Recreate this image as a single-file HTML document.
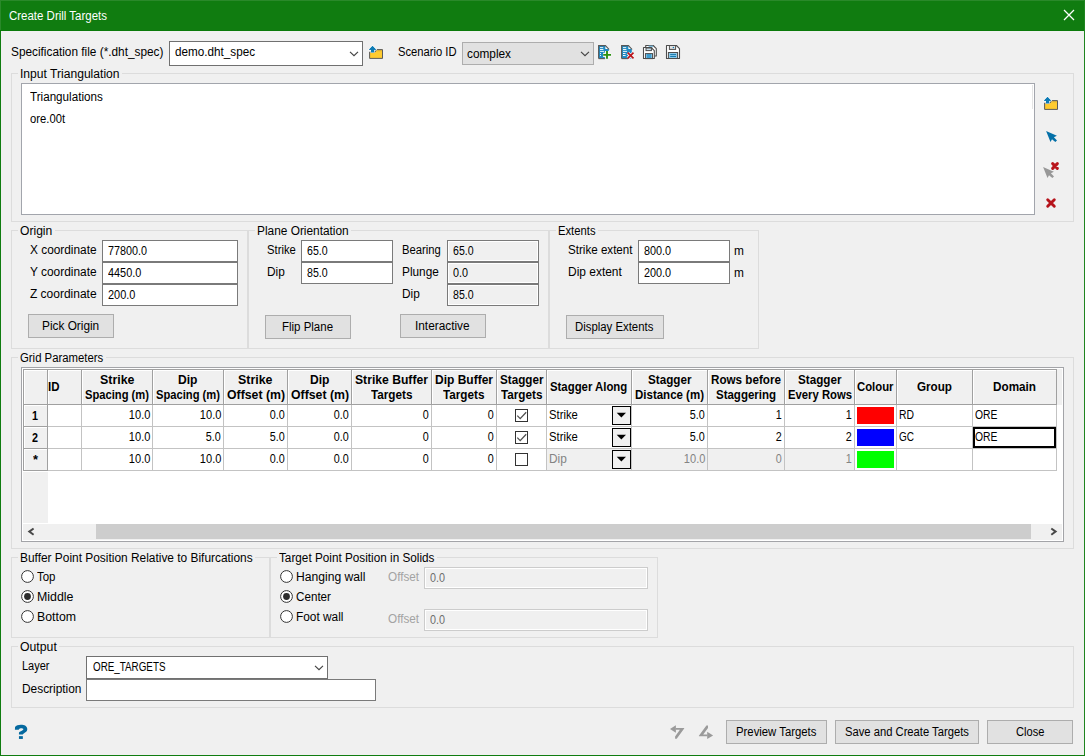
<!DOCTYPE html>
<html>
<head>
<meta charset="utf-8">
<title>Create Drill Targets</title>
<style>
*{box-sizing:border-box;margin:0;padding:0}
html,body{width:1085px;height:756px;overflow:hidden;background:#f0f0f0}
body{position:relative;font-family:"Liberation Sans",sans-serif;font-size:12px;color:#000;line-height:14px}
.a{position:absolute}
.t{position:absolute;white-space:nowrap;height:14px;line-height:14px;font-size:12px;transform-origin:0 50%}
.t.r{transform-origin:100% 50%}
.b{font-weight:bold}
svg{position:absolute;overflow:visible}
</style>
</head>
<body>
<div class="a" style="left:0px;top:0px;width:1085px;height:31px;background:#107c10"></div>
<div class="a" style="left:0px;top:0px;width:1085px;height:1px;background:#2a892a"></div>
<div class="a" style="left:0px;top:0px;width:1px;height:31px;background:#2a892a"></div>
<div class="a" style="left:0px;top:30px;width:1085px;height:1px;background:#0a7a0a"></div>
<div class="a" style="left:0px;top:31px;width:1px;height:725px;background:#107c10"></div>
<div class="a" style="left:1084px;top:0px;width:1px;height:756px;background:#1f851f"></div>
<div class="a" style="left:0px;top:755px;width:1085px;height:1px;background:#107c10"></div>
<div class="t" style="left:9px;top:9px;color:#fff;transform:scaleX(0.956)">Create Drill Targets</div>
<svg style="left:1063px;top:9px" width="12" height="12" viewBox="0 0 12 12"><path d="M1 1L11 11M11 1L1 11" stroke="#fff" stroke-width="1.25" fill="none"/></svg>
<div class="t" style="left:11px;top:45px;transform:scaleX(0.985)">Specification file (*.dht_spec)</div>
<div class="a" style="left:169px;top:41px;width:194px;height:25px;background:#fff;border:1px solid #707070"></div>
<div class="t" style="left:175.4px;top:45px;transform:scaleX(0.975)">demo.dht_spec</div>
<svg style="left:349px;top:51px" width="10" height="7" viewBox="0 0 10 7"><path d="M1 0.8L5 4.7L9 0.8" fill="none" stroke="#444" stroke-width="1.15"/></svg>
<div class="t" style="left:398.1px;top:45px;transform:scaleX(0.933)">Scenario ID</div>
<div class="a" style="left:462px;top:42px;width:132px;height:23px;background:#e1e1e1;border:1px solid #adadad"></div>
<div class="t" style="left:466.8px;top:46.6px;transform:scaleX(0.985)">complex</div>
<svg style="left:580px;top:51px" width="10" height="7" viewBox="0 0 10 7"><path d="M1 0.8L5 4.7L9 0.8" fill="none" stroke="#444" stroke-width="1.15"/></svg>
<div class="a" style="left:11px;top:73px;width:1063px;height:149px;border:1px solid #dcdcdc"></div>
<div class="a" style="left:18px;top:71px;width:104px;height:5px;background:#f0f0f0"></div>
<div class="t" style="left:20.4px;top:66.6px;transform:scaleX(1.008)">Input Triangulation</div>
<div class="a" style="left:21px;top:83px;width:1014px;height:132px;background:#fff;border:1px solid #a2a5ac"></div>
<div class="a" style="left:1032px;top:85px;width:1px;height:24px;background:#e5e5e5"></div>
<div class="t" style="left:29.9px;top:90px;transform:scaleX(0.971)">Triangulations</div>
<div class="t" style="left:29.9px;top:112px;transform:scaleX(0.937)">ore.00t</div>
<div class="a" style="left:11px;top:230px;width:237px;height:119px;border:1px solid #dcdcdc"></div>
<div class="a" style="left:18px;top:228px;width:37px;height:5px;background:#f0f0f0"></div>
<div class="t" style="left:20.4px;top:223.6px;transform:scaleX(1.009)">Origin</div>
<div class="t" style="left:29.9px;top:243px;transform:scaleX(0.988)">X coordinate</div>
<div class="t" style="left:29.9px;top:265px;transform:scaleX(0.991)">Y coordinate</div>
<div class="t" style="left:29.9px;top:287px">Z coordinate</div>
<div class="a" style="left:102px;top:240px;width:136px;height:22px;background:#fff;border:1px solid #7a7a7a"></div>
<div class="a" style="left:102px;top:262px;width:136px;height:22px;background:#fff;border:1px solid #7a7a7a"></div>
<div class="a" style="left:102px;top:284px;width:136px;height:22px;background:#fff;border:1px solid #7a7a7a"></div>
<div class="t" style="left:107.7px;top:244px;transform:scaleX(0.899)">77800.0</div>
<div class="t" style="left:107.7px;top:266px;transform:scaleX(0.907)">4450.0</div>
<div class="t" style="left:107.7px;top:288px;transform:scaleX(0.912)">200.0</div>
<div class="a" style="left:28px;top:314px;width:86px;height:24px;background:#e1e1e1;border:1px solid #adadad"></div>
<div class="t" style="left:42.3px;top:319px;transform:scaleX(0.986)">Pick Origin</div>
<div class="a" style="left:248px;top:230px;width:301px;height:119px;border:1px solid #dcdcdc"></div>
<div class="a" style="left:255px;top:228px;width:96px;height:5px;background:#f0f0f0"></div>
<div class="t" style="left:257.4px;top:223.6px;transform:scaleX(0.989)">Plane Orientation</div>
<div class="t" style="left:267px;top:243px;transform:scaleX(0.938)">Strike</div>
<div class="t" style="left:267px;top:265px;transform:scaleX(0.988)">Dip</div>
<div class="a" style="left:301px;top:240px;width:92px;height:22px;background:#fff;border:1px solid #7a7a7a"></div>
<div class="a" style="left:301px;top:262px;width:92px;height:22px;background:#fff;border:1px solid #7a7a7a"></div>
<div class="t" style="left:307.2px;top:244px;transform:scaleX(0.882)">65.0</div>
<div class="t" style="left:307.2px;top:266px;transform:scaleX(0.882)">85.0</div>
<div class="t" style="left:402.2px;top:243px;transform:scaleX(0.938)">Bearing</div>
<div class="t" style="left:402.2px;top:265px;transform:scaleX(0.985)">Plunge</div>
<div class="t" style="left:402.2px;top:287px;transform:scaleX(0.988)">Dip</div>
<div class="a" style="left:447px;top:240px;width:92px;height:22px;background:#f0f0f0;border:1px solid #7a7a7a;box-shadow:inset 0 0 0 1px #fff"></div>
<div class="a" style="left:447px;top:262px;width:92px;height:22px;background:#f0f0f0;border:1px solid #7a7a7a;box-shadow:inset 0 0 0 1px #fff"></div>
<div class="a" style="left:447px;top:284px;width:92px;height:22px;background:#f0f0f0;border:1px solid #7a7a7a;box-shadow:inset 0 0 0 1px #fff"></div>
<div class="t" style="left:453px;top:244px;transform:scaleX(0.882)">65.0</div>
<div class="t" style="left:453px;top:266px;transform:scaleX(0.899)">0.0</div>
<div class="t" style="left:453px;top:288px;transform:scaleX(0.882)">85.0</div>
<div class="a" style="left:265px;top:315px;width:86px;height:24px;background:#e1e1e1;border:1px solid #adadad"></div>
<div class="t" style="left:282.3px;top:320px;transform:scaleX(0.956)">Flip Plane</div>
<div class="a" style="left:400px;top:314px;width:86px;height:24px;background:#e1e1e1;border:1px solid #adadad"></div>
<div class="t" style="left:415.4px;top:319px;transform:scaleX(0.986)">Interactive</div>
<div class="a" style="left:549px;top:230px;width:210px;height:119px;border:1px solid #dcdcdc"></div>
<div class="a" style="left:556px;top:228px;width:42px;height:5px;background:#f0f0f0"></div>
<div class="t" style="left:558.4px;top:223.6px;transform:scaleX(0.937)">Extents</div>
<div class="t" style="left:568px;top:243px;transform:scaleX(0.967)">Strike extent</div>
<div class="t" style="left:568px;top:265px;transform:scaleX(0.996)">Dip extent</div>
<div class="a" style="left:638px;top:240px;width:92px;height:22px;background:#fff;border:1px solid #7a7a7a"></div>
<div class="a" style="left:638px;top:262px;width:92px;height:22px;background:#fff;border:1px solid #7a7a7a"></div>
<div class="t" style="left:644.2px;top:244px;transform:scaleX(0.902)">800.0</div>
<div class="t" style="left:644.2px;top:266px;transform:scaleX(0.902)">200.0</div>
<div class="t" style="left:733.5px;top:244px;transform:scaleX(0.990)">m</div>
<div class="t" style="left:733.5px;top:266px;transform:scaleX(0.990)">m</div>
<div class="a" style="left:566px;top:315px;width:98px;height:24px;background:#e1e1e1;border:1px solid #adadad"></div>
<div class="t" style="left:575.3px;top:320px;transform:scaleX(0.947)">Display Extents</div>
<div class="a" style="left:11px;top:357px;width:1063px;height:192px;border:1px solid #dcdcdc"></div>
<div class="a" style="left:18px;top:355px;width:88px;height:5px;background:#f0f0f0"></div>
<div class="t" style="left:20.4px;top:350.6px;transform:scaleX(0.946)">Grid Parameters</div>
<div class="a" style="left:21px;top:367px;width:1043px;height:175px;background:#fff;border:1px solid #a3a4a8"></div>
<div class="a" style="left:23px;top:369px;width:1034px;height:36px;background:#f0f0f0;border-top:1px solid #a0a0a0;border-bottom:1px solid #a0a0a0"></div>
<div class="a" style="left:1057px;top:369px;width:5px;height:36px;background:#f0f0f0"></div>
<div class="a" style="left:23px;top:405px;width:25px;height:66px;background:#f0f0f0"></div>
<div class="a" style="left:23px;top:472px;width:25px;height:51px;background:#f0f0f0"></div>
<div class="a" style="left:547px;top:449px;width:307px;height:21px;background:#f0f0f0"></div>
<div class="a" style="left:24px;top:370px;width:23px;height:1px;background:#fff"></div>
<div class="a" style="left:24px;top:370px;width:1px;height:34px;background:#fff"></div>
<div class="a" style="left:48px;top:370px;width:33px;height:1px;background:#fff"></div>
<div class="a" style="left:48px;top:370px;width:1px;height:34px;background:#fff"></div>
<div class="a" style="left:82px;top:370px;width:70px;height:1px;background:#fff"></div>
<div class="a" style="left:82px;top:370px;width:1px;height:34px;background:#fff"></div>
<div class="a" style="left:153px;top:370px;width:70px;height:1px;background:#fff"></div>
<div class="a" style="left:153px;top:370px;width:1px;height:34px;background:#fff"></div>
<div class="a" style="left:224px;top:370px;width:63px;height:1px;background:#fff"></div>
<div class="a" style="left:224px;top:370px;width:1px;height:34px;background:#fff"></div>
<div class="a" style="left:288px;top:370px;width:63px;height:1px;background:#fff"></div>
<div class="a" style="left:288px;top:370px;width:1px;height:34px;background:#fff"></div>
<div class="a" style="left:352px;top:370px;width:79px;height:1px;background:#fff"></div>
<div class="a" style="left:352px;top:370px;width:1px;height:34px;background:#fff"></div>
<div class="a" style="left:432px;top:370px;width:64px;height:1px;background:#fff"></div>
<div class="a" style="left:432px;top:370px;width:1px;height:34px;background:#fff"></div>
<div class="a" style="left:497px;top:370px;width:49px;height:1px;background:#fff"></div>
<div class="a" style="left:497px;top:370px;width:1px;height:34px;background:#fff"></div>
<div class="a" style="left:547px;top:370px;width:84px;height:1px;background:#fff"></div>
<div class="a" style="left:547px;top:370px;width:1px;height:34px;background:#fff"></div>
<div class="a" style="left:632px;top:370px;width:75px;height:1px;background:#fff"></div>
<div class="a" style="left:632px;top:370px;width:1px;height:34px;background:#fff"></div>
<div class="a" style="left:708px;top:370px;width:76px;height:1px;background:#fff"></div>
<div class="a" style="left:708px;top:370px;width:1px;height:34px;background:#fff"></div>
<div class="a" style="left:785px;top:370px;width:69px;height:1px;background:#fff"></div>
<div class="a" style="left:785px;top:370px;width:1px;height:34px;background:#fff"></div>
<div class="a" style="left:855px;top:370px;width:41px;height:1px;background:#fff"></div>
<div class="a" style="left:855px;top:370px;width:1px;height:34px;background:#fff"></div>
<div class="a" style="left:897px;top:370px;width:75px;height:1px;background:#fff"></div>
<div class="a" style="left:897px;top:370px;width:1px;height:34px;background:#fff"></div>
<div class="a" style="left:973px;top:370px;width:83px;height:1px;background:#fff"></div>
<div class="a" style="left:973px;top:370px;width:1px;height:34px;background:#fff"></div>
<div class="a" style="left:24px;top:405px;width:23px;height:1px;background:#fff"></div>
<div class="a" style="left:24px;top:405px;width:1px;height:21px;background:#fff"></div>
<div class="a" style="left:24px;top:427px;width:23px;height:1px;background:#fff"></div>
<div class="a" style="left:24px;top:427px;width:1px;height:21px;background:#fff"></div>
<div class="a" style="left:24px;top:449px;width:23px;height:1px;background:#fff"></div>
<div class="a" style="left:24px;top:449px;width:1px;height:21px;background:#fff"></div>
<div class="a" style="left:81px;top:405px;width:1px;height:66px;background:#c3c3c3"></div>
<div class="a" style="left:152px;top:405px;width:1px;height:66px;background:#c3c3c3"></div>
<div class="a" style="left:223px;top:405px;width:1px;height:66px;background:#c3c3c3"></div>
<div class="a" style="left:287px;top:405px;width:1px;height:66px;background:#c3c3c3"></div>
<div class="a" style="left:351px;top:405px;width:1px;height:66px;background:#c3c3c3"></div>
<div class="a" style="left:431px;top:405px;width:1px;height:66px;background:#c3c3c3"></div>
<div class="a" style="left:496px;top:405px;width:1px;height:66px;background:#c3c3c3"></div>
<div class="a" style="left:546px;top:405px;width:1px;height:66px;background:#c3c3c3"></div>
<div class="a" style="left:631px;top:405px;width:1px;height:66px;background:#c3c3c3"></div>
<div class="a" style="left:707px;top:405px;width:1px;height:66px;background:#c3c3c3"></div>
<div class="a" style="left:784px;top:405px;width:1px;height:66px;background:#c3c3c3"></div>
<div class="a" style="left:854px;top:405px;width:1px;height:66px;background:#c3c3c3"></div>
<div class="a" style="left:896px;top:405px;width:1px;height:66px;background:#c3c3c3"></div>
<div class="a" style="left:972px;top:405px;width:1px;height:66px;background:#c3c3c3"></div>
<div class="a" style="left:1056px;top:405px;width:1px;height:66px;background:#c3c3c3"></div>
<div class="a" style="left:48px;top:426px;width:1009px;height:1px;background:#c3c3c3"></div>
<div class="a" style="left:48px;top:448px;width:1009px;height:1px;background:#c3c3c3"></div>
<div class="a" style="left:48px;top:470px;width:1009px;height:1px;background:#c3c3c3"></div>
<div class="a" style="left:23px;top:369px;width:1px;height:36px;background:#a0a0a0"></div>
<div class="a" style="left:47px;top:369px;width:1px;height:36px;background:#a0a0a0"></div>
<div class="a" style="left:81px;top:369px;width:1px;height:36px;background:#a0a0a0"></div>
<div class="a" style="left:152px;top:369px;width:1px;height:36px;background:#a0a0a0"></div>
<div class="a" style="left:223px;top:369px;width:1px;height:36px;background:#a0a0a0"></div>
<div class="a" style="left:287px;top:369px;width:1px;height:36px;background:#a0a0a0"></div>
<div class="a" style="left:351px;top:369px;width:1px;height:36px;background:#a0a0a0"></div>
<div class="a" style="left:431px;top:369px;width:1px;height:36px;background:#a0a0a0"></div>
<div class="a" style="left:496px;top:369px;width:1px;height:36px;background:#a0a0a0"></div>
<div class="a" style="left:546px;top:369px;width:1px;height:36px;background:#a0a0a0"></div>
<div class="a" style="left:631px;top:369px;width:1px;height:36px;background:#a0a0a0"></div>
<div class="a" style="left:707px;top:369px;width:1px;height:36px;background:#a0a0a0"></div>
<div class="a" style="left:784px;top:369px;width:1px;height:36px;background:#a0a0a0"></div>
<div class="a" style="left:854px;top:369px;width:1px;height:36px;background:#a0a0a0"></div>
<div class="a" style="left:896px;top:369px;width:1px;height:36px;background:#a0a0a0"></div>
<div class="a" style="left:972px;top:369px;width:1px;height:36px;background:#a0a0a0"></div>
<div class="a" style="left:1056px;top:369px;width:1px;height:36px;background:#a0a0a0"></div>
<div class="a" style="left:23px;top:369px;width:1px;height:102px;background:#a0a0a0"></div>
<div class="a" style="left:47px;top:369px;width:1px;height:102px;background:#a0a0a0"></div>
<div class="a" style="left:23px;top:404px;width:25px;height:1px;background:#a0a0a0"></div>
<div class="a" style="left:23px;top:426px;width:25px;height:1px;background:#a0a0a0"></div>
<div class="a" style="left:23px;top:448px;width:25px;height:1px;background:#a0a0a0"></div>
<div class="a" style="left:23px;top:470px;width:25px;height:1px;background:#a0a0a0"></div>
<div class="a" style="left:48px;top:404px;width:1009px;height:1px;background:#a0a0a0"></div>
<div class="t b" style="left:48px;top:380px;transform:scaleX(0.958)">ID</div>
<div class="t b" style="left:99.75px;top:373px;transform:scaleX(1.034)">Strike</div>
<div class="t b" style="left:85.0px;top:388px;transform:scaleX(0.932)">Spacing (m)</div>
<div class="t b" style="left:178.25px;top:373px;transform:scaleX(1.008)">Dip</div>
<div class="t b" style="left:156.0px;top:388px;transform:scaleX(0.932)">Spacing (m)</div>
<div class="t b" style="left:238.25px;top:373px;transform:scaleX(1.034)">Strike</div>
<div class="t b" style="left:226.5px;top:388px;transform:scaleX(1.023)">Offset (m)</div>
<div class="t b" style="left:309.75px;top:373px;transform:scaleX(1.008)">Dip</div>
<div class="t b" style="left:290.5px;top:388px;transform:scaleX(1.023)">Offset (m)</div>
<div class="t b" style="left:355.0px;top:373px;transform:scaleX(1.013)">Strike Buffer</div>
<div class="t b" style="left:370.75px;top:388px;transform:scaleX(0.977)">Targets</div>
<div class="t b" style="left:435.0px;top:373px">Dip Buffer</div>
<div class="t b" style="left:443.25px;top:388px;transform:scaleX(0.977)">Targets</div>
<div class="t b" style="left:499.75px;top:373px;transform:scaleX(0.973)">Stagger</div>
<div class="t b" style="left:500.75px;top:388px;transform:scaleX(0.977)">Targets</div>
<div class="t b" style="left:550.4px;top:380px;transform:scaleX(0.947)">Stagger Along</div>
<div class="t b" style="left:647.75px;top:373px;transform:scaleX(0.973)">Stagger</div>
<div class="t b" style="left:635.0px;top:388px;transform:scaleX(0.958)">Distance (m)</div>
<div class="t b" style="left:711.0px;top:373px;transform:scaleX(0.972)">Rows before</div>
<div class="t b" style="left:716.0px;top:388px;transform:scaleX(0.957)">Staggering</div>
<div class="t b" style="left:797.75px;top:373px;transform:scaleX(0.973)">Stagger</div>
<div class="t b" style="left:787.5px;top:388px;transform:scaleX(0.941)">Every Rows</div>
<div class="t b" style="left:857.25px;top:380px;transform:scaleX(0.944)">Colour</div>
<div class="t b" style="left:917.0px;top:380px;transform:scaleX(0.972)">Group</div>
<div class="t b" style="left:993.0px;top:380px;transform:scaleX(0.977)">Domain</div>
<div class="t b" style="left:32.1px;top:408.5px;transform:scaleX(0.897)">1</div>
<div class="t b" style="left:32.1px;top:430.5px;transform:scaleX(0.897)">2</div>
<div class="t b" style="left:33.2px;top:452.5px;transform:scaleX(1.070)">*</div>
<div class="t r" style="right:934.5px;top:408px;transform:scaleX(0.920)">10.0</div>
<div class="t r" style="right:863.5px;top:408px;transform:scaleX(0.920)">10.0</div>
<div class="t r" style="right:800.0px;top:408px;transform:scaleX(0.899)">0.0</div>
<div class="t r" style="right:736.0px;top:408px;transform:scaleX(0.899)">0.0</div>
<div class="t r" style="right:656.2px;top:408px;transform:scaleX(0.897)">0</div>
<div class="t r" style="right:591.2px;top:408px;transform:scaleX(0.897)">0</div>
<div class="a" style="left:515px;top:409px;width:13px;height:13px;background:#fff;border:1px solid #333"></div>
<svg style="left:515px;top:409px" width="13" height="13" viewBox="0 0 13 13"><path d="M2.3 6.6L5.2 9.6L11.2 3.2" fill="none" stroke="#505050" stroke-width="1.3"/></svg>
<div class="t" style="left:549.2px;top:408px;transform:scaleX(0.938)">Strike</div>
<div class="a" style="left:612px;top:406px;width:19px;height:19px;background:#f0f0f0;border:1px solid #000;border-left-width:1.5px;border-bottom-width:1.5px"></div>
<svg style="left:616px;top:412px" width="11" height="7" viewBox="0 0 11 7"><path d="M0.7 0.8H10L5.35 5.6Z" fill="#000"/></svg>
<div class="t r" style="right:380.0px;top:408px;transform:scaleX(0.899)">5.0</div>
<div class="t r" style="right:303.5px;top:408px;transform:scaleX(0.897)">1</div>
<div class="t r" style="right:233.5px;top:408px;transform:scaleX(0.897)">1</div>
<div class="a" style="left:857px;top:407px;width:37px;height:17px;background:#ff0000"></div>
<div class="t" style="left:899.3px;top:408px;transform:scaleX(0.865)">RD</div>
<div class="t" style="left:975px;top:408px;transform:scaleX(0.861)">ORE</div>
<div class="t r" style="right:934.5px;top:430px;transform:scaleX(0.920)">10.0</div>
<div class="t r" style="right:864.0px;top:430px;transform:scaleX(0.899)">5.0</div>
<div class="t r" style="right:800.0px;top:430px;transform:scaleX(0.899)">5.0</div>
<div class="t r" style="right:736.0px;top:430px;transform:scaleX(0.899)">0.0</div>
<div class="t r" style="right:656.2px;top:430px;transform:scaleX(0.897)">0</div>
<div class="t r" style="right:591.2px;top:430px;transform:scaleX(0.897)">0</div>
<div class="a" style="left:515px;top:431px;width:13px;height:13px;background:#fff;border:1px solid #333"></div>
<svg style="left:515px;top:431px" width="13" height="13" viewBox="0 0 13 13"><path d="M2.3 6.6L5.2 9.6L11.2 3.2" fill="none" stroke="#505050" stroke-width="1.3"/></svg>
<div class="t" style="left:549.2px;top:430px;transform:scaleX(0.938)">Strike</div>
<div class="a" style="left:612px;top:428px;width:19px;height:19px;background:#f0f0f0;border:1px solid #000;border-left-width:1.5px;border-bottom-width:1.5px"></div>
<svg style="left:616px;top:434px" width="11" height="7" viewBox="0 0 11 7"><path d="M0.7 0.8H10L5.35 5.6Z" fill="#000"/></svg>
<div class="t r" style="right:380.0px;top:430px;transform:scaleX(0.899)">5.0</div>
<div class="t r" style="right:303.70000000000005px;top:430px;transform:scaleX(0.897)">2</div>
<div class="t r" style="right:233.70000000000005px;top:430px;transform:scaleX(0.897)">2</div>
<div class="a" style="left:857px;top:429px;width:37px;height:17px;background:#0000ff"></div>
<div class="t" style="left:899.3px;top:430px;transform:scaleX(0.833)">GC</div>
<div class="t" style="left:975px;top:430px;transform:scaleX(0.861)">ORE</div>
<div class="t r" style="right:934.5px;top:452px;transform:scaleX(0.920)">10.0</div>
<div class="t r" style="right:863.5px;top:452px;transform:scaleX(0.920)">10.0</div>
<div class="t r" style="right:800.0px;top:452px;transform:scaleX(0.899)">0.0</div>
<div class="t r" style="right:736.0px;top:452px;transform:scaleX(0.899)">0.0</div>
<div class="t r" style="right:656.2px;top:452px;transform:scaleX(0.897)">0</div>
<div class="t r" style="right:591.2px;top:452px;transform:scaleX(0.897)">0</div>
<div class="a" style="left:515px;top:453px;width:13px;height:13px;background:#fff;border:1px solid #333"></div>
<div class="t" style="left:549.2px;top:452px;color:#838383;transform:scaleX(0.988)">Dip</div>
<div class="a" style="left:612px;top:450px;width:19px;height:19px;background:#f0f0f0;border:1px solid #000;border-left-width:1.5px;border-bottom-width:1.5px"></div>
<svg style="left:616px;top:456px" width="11" height="7" viewBox="0 0 11 7"><path d="M0.7 0.8H10L5.35 5.6Z" fill="#000"/></svg>
<div class="t r" style="right:379.5px;top:452px;color:#838383;transform:scaleX(0.920)">10.0</div>
<div class="t r" style="right:303.20000000000005px;top:452px;color:#838383;transform:scaleX(0.897)">0</div>
<div class="t r" style="right:233.5px;top:452px;color:#838383;transform:scaleX(0.897)">1</div>
<div class="a" style="left:857px;top:451px;width:37px;height:17px;background:#00ff00"></div>
<div class="a" style="left:973px;top:427px;width:83px;height:21px;border:2px solid #000"></div>
<div class="a" style="left:23px;top:524px;width:1039px;height:16px;background:#f0f0f0"></div>
<div class="a" style="left:96px;top:524px;width:935px;height:15px;background:#cdcdcd"></div>
<svg style="left:27px;top:526px" width="8" height="11" viewBox="0 0 8 11"><path d="M6.6 2.5L2.3 5.6L6.6 8.7" fill="none" stroke="#484848" stroke-width="2"/></svg>
<svg style="left:1050px;top:526px" width="8" height="11" viewBox="0 0 8 11"><path d="M1.3 2.5L5.6 5.6L1.3 8.7" fill="none" stroke="#484848" stroke-width="2"/></svg>
<div class="a" style="left:11px;top:557px;width:259px;height:81px;border:1px solid #dcdcdc"></div>
<div class="a" style="left:18px;top:555px;width:237px;height:5px;background:#f0f0f0"></div>
<div class="t" style="left:20.4px;top:550.6px;transform:scaleX(0.992)">Buffer Point Position Relative to Bifurcations</div>
<svg style="left:21px;top:570px" width="13" height="13" viewBox="0 0 13 13"><circle cx="6.5" cy="6.5" r="5.9" fill="#fff" stroke="#333" stroke-width="1"/></svg>
<svg style="left:21px;top:590px" width="13" height="13" viewBox="0 0 13 13"><circle cx="6.5" cy="6.5" r="5.9" fill="#fff" stroke="#333" stroke-width="1"/><circle cx="6.5" cy="6.5" r="3.4" fill="#2c2c2c"/></svg>
<svg style="left:21px;top:610px" width="13" height="13" viewBox="0 0 13 13"><circle cx="6.5" cy="6.5" r="5.9" fill="#fff" stroke="#333" stroke-width="1"/></svg>
<div class="t" style="left:37px;top:570px;transform:scaleX(0.956)">Top</div>
<div class="t" style="left:37.4px;top:590px;transform:scaleX(1.032)">Middle</div>
<div class="t" style="left:37.4px;top:610px;transform:scaleX(1.026)">Bottom</div>
<div class="a" style="left:270px;top:557px;width:388px;height:81px;border:1px solid #dcdcdc"></div>
<div class="a" style="left:277px;top:555px;width:160px;height:5px;background:#f0f0f0"></div>
<div class="t" style="left:279.4px;top:550.6px;transform:scaleX(0.979)">Target Point Position in Solids</div>
<svg style="left:280px;top:570px" width="13" height="13" viewBox="0 0 13 13"><circle cx="6.5" cy="6.5" r="5.9" fill="#fff" stroke="#333" stroke-width="1"/></svg>
<svg style="left:280px;top:590px" width="13" height="13" viewBox="0 0 13 13"><circle cx="6.5" cy="6.5" r="5.9" fill="#fff" stroke="#333" stroke-width="1"/><circle cx="6.5" cy="6.5" r="3.4" fill="#2c2c2c"/></svg>
<svg style="left:280px;top:610px" width="13" height="13" viewBox="0 0 13 13"><circle cx="6.5" cy="6.5" r="5.9" fill="#fff" stroke="#333" stroke-width="1"/></svg>
<div class="t" style="left:295.9px;top:570px;transform:scaleX(1.011)">Hanging wall</div>
<div class="t" style="left:295.9px;top:590px;transform:scaleX(0.971)">Center</div>
<div class="t" style="left:295.9px;top:610px;transform:scaleX(0.989)">Foot wall</div>
<div class="t" style="left:387.6px;top:570px;color:#a3a3a3;transform:scaleX(0.978)">Offset</div>
<div class="t" style="left:387.6px;top:612px;color:#a3a3a3;transform:scaleX(0.978)">Offset</div>
<div class="a" style="left:424px;top:567px;width:224px;height:22px;background:#f0f0f0;border:1px solid #cccccc;box-shadow:inset 0 0 0 1px #fff"></div>
<div class="a" style="left:424px;top:609px;width:224px;height:22px;background:#f0f0f0;border:1px solid #cccccc;box-shadow:inset 0 0 0 1px #fff"></div>
<div class="t" style="left:430px;top:571px;color:#6d6d6d;transform:scaleX(0.899)">0.0</div>
<div class="t" style="left:430px;top:613px;color:#6d6d6d;transform:scaleX(0.899)">0.0</div>
<div class="a" style="left:11px;top:646px;width:1063px;height:62px;border:1px solid #dcdcdc"></div>
<div class="a" style="left:18px;top:644px;width:41px;height:5px;background:#f0f0f0"></div>
<div class="t" style="left:20.4px;top:639.6px;transform:scaleX(1.021)">Output</div>
<div class="t" style="left:21.6px;top:659px;transform:scaleX(0.916)">Layer</div>
<div class="t" style="left:21.6px;top:682px;transform:scaleX(0.991)">Description</div>
<div class="a" style="left:86px;top:656px;width:242px;height:23px;background:#fff;border:1px solid #707070"></div>
<div class="t" style="left:92.5px;top:660px;transform:scaleX(0.819)">ORE_TARGETS</div>
<svg style="left:314px;top:665px" width="10" height="7" viewBox="0 0 10 7"><path d="M1 0.8L5 4.7L9 0.8" fill="none" stroke="#444" stroke-width="1.15"/></svg>
<div class="a" style="left:86px;top:679px;width:290px;height:22px;background:#fff;border:1px solid #7a7a7a"></div>
<div class="a" style="left:726px;top:720px;width:101px;height:24px;background:#e1e1e1;border:1px solid #adadad"></div>
<div class="t" style="left:736.3px;top:725px;transform:scaleX(0.944)">Preview Targets</div>
<div class="a" style="left:835px;top:720px;width:144px;height:24px;background:#e1e1e1;border:1px solid #adadad"></div>
<div class="t" style="left:845.1px;top:725px;transform:scaleX(0.935)">Save and Create Targets</div>
<div class="a" style="left:987px;top:720px;width:86px;height:24px;background:#e1e1e1;border:1px solid #adadad"></div>
<div class="t" style="left:1015.5px;top:725px;transform:scaleX(0.925)">Close</div>
<svg style="left:1043px;top:95px" width="16" height="16" viewBox="0 0 16 16"><defs><linearGradient id="fg1043" x1="0" y1="0" x2="0" y2="1"><stop offset="0" stop-color="#d9ae35"/><stop offset="0.28" stop-color="#ffcb2f"/><stop offset="1" stop-color="#ffcb2f"/></linearGradient></defs><path d="M1.6 8.05H7L8.6 5.6H14.5V14.4H1.6Z" fill="url(#fg1043)" stroke="#5b5b5b" stroke-width="1" stroke-linejoin="round"/><path d="M4.5 1.9L8.2 5.8H6.1V8.2H3V5.8H0.9Z" fill="#0d7bb5" stroke="#ffffff" stroke-width="1.1" paint-order="stroke" stroke-linejoin="miter"/><path d="M4.5 1.9L8.2 5.8H6.1V8.3H3V5.8H0.9Z" fill="#0d7bb5"/></svg>
<svg style="left:368px;top:44px" width="16" height="16" viewBox="0 0 16 16"><defs><linearGradient id="fg368" x1="0" y1="0" x2="0" y2="1"><stop offset="0" stop-color="#d9ae35"/><stop offset="0.28" stop-color="#ffcb2f"/><stop offset="1" stop-color="#ffcb2f"/></linearGradient></defs><path d="M1.6 8.05H7L8.6 5.6H14.5V14.4H1.6Z" fill="url(#fg368)" stroke="#5b5b5b" stroke-width="1" stroke-linejoin="round"/><path d="M4.5 1.9L8.2 5.8H6.1V8.2H3V5.8H0.9Z" fill="#0d7bb5" stroke="#ffffff" stroke-width="1.1" paint-order="stroke" stroke-linejoin="miter"/><path d="M4.5 1.9L8.2 5.8H6.1V8.3H3V5.8H0.9Z" fill="#0d7bb5"/></svg>
<svg style="left:1045px;top:130px" width="14" height="14" viewBox="0 0 14 14"><path d="M1.1 1.1L11.9 5.7L8.9 7.3L12 10.5L10.3 12.1L7 9.2L5.5 12.1Z" fill="#0470a8"/></svg>
<svg style="left:1042px;top:166px" width="14" height="14" viewBox="0 0 14 14"><path d="M1.1 1.1L11.9 5.7L8.9 7.3L12 10.5L10.3 12.1L7 9.2L5.5 12.1Z" fill="#989898"/></svg>
<svg style="left:1050px;top:161px" width="10" height="10" viewBox="0 0 10 10"><path d="M2.65 2.65L7.35 7.35M7.35 2.65L2.65 7.35" stroke="#b9151c" stroke-width="3" stroke-linecap="round"/></svg>
<svg style="left:1045px;top:197px" width="12" height="12" viewBox="0 0 12 12"><path d="M2.7 2.7L9.3 9.3M9.3 2.7L2.7 9.3" stroke="#b6131b" stroke-width="2.9" stroke-linecap="round"/></svg>
<svg style="left:598px;top:45px" width="14" height="14" viewBox="0 0 14 14"><path d="M0.6 0.6H7.4L10.8 4.1V13.6H0.6Z" fill="#1f8bc4" stroke="none"/><path d="M7.4 0.6L10.8 4.1H7.4Z" fill="#fff"/><path d="M0.6 13.6V0.6H7.4L10.8 4.1V4.6" fill="none" stroke="#585858" stroke-width="1.1"/><path d="M0.6 13.6H7" fill="none" stroke="#585858" stroke-width="1.1"/><path d="M2 2.6H5.2M2 4.5H5.4M2 6.4H6M2 8.5H3M2 10.5H3" stroke="#fff" stroke-width="0.9"/><path d="M5.1 9.9H13M9 6.1V13.7" stroke="#f7f7f7" stroke-width="4.2"/><path d="M5.2 9.9H13M9 6.1V13.7" stroke="#2b9211" stroke-width="1.9"/></svg>
<svg style="left:621px;top:45px" width="14" height="14" viewBox="0 0 14 14"><path d="M0.6 0.6H7.4L10.8 4.1V13.6H0.6Z" fill="#1f8bc4" stroke="none"/><path d="M7.4 0.6L10.8 4.1H7.4Z" fill="#fff"/><path d="M0.6 13.6V0.6H7.4L10.8 4.1V4.6" fill="none" stroke="#585858" stroke-width="1.1"/><path d="M0.6 13.6H7" fill="none" stroke="#585858" stroke-width="1.1"/><path d="M2 2.6H5.2M2 4.5H5.4M2 6.4H6M2 8.5H3M2 10.5H3" stroke="#fff" stroke-width="0.9"/><path d="M2 8.5H4.6M2 10.5H4.6" stroke="#fff" stroke-width="0.9"/><path d="M6.8 7.8L12.4 13.2M12.4 7.8L6.8 13.2" stroke="#f7f7f7" stroke-width="3.2"/><path d="M6.7 7.7L12.5 13.3M12.5 7.7L6.7 13.3" stroke="#b9151c" stroke-width="1.7"/></svg>
<svg style="left:643px;top:45px" width="15" height="14" viewBox="0 0 15 14"><path d="M2.7 0.5H10.200000000000001L13.3 3.6V11.0H2.7Z" fill="#fff" stroke="#4d4d4d" stroke-width="1.1" stroke-linejoin="round"/><rect x="5.6" y="0.6" width="4.4" height="1.8" fill="#7fb8d8"/><path d="M0.5 2.5H8.200000000000001L11.3 5.6V13.5H0.5Z" fill="#fff" stroke="#4d4d4d" stroke-width="1.1" stroke-linejoin="round"/><rect x="3" y="3" width="5.4" height="2.6" fill="#c9dfeb" stroke="#4d4d4d" stroke-width="1"/><rect x="2.5" y="8.6" width="7" height="5" fill="#3f9dd0" stroke="#4d4d4d" stroke-width="1"/><path d="M3.4 9.2V13M8.6 9.2V13" stroke="#9fd0ea" stroke-width="0.7"/></svg>
<svg style="left:666px;top:45px" width="14" height="14" viewBox="0 0 14 14"><path d="M0.5 0.5H10.4L13.5 3.6V13.5H0.5Z" fill="#fff" stroke="#4d4d4d" stroke-width="1.1" stroke-linejoin="round"/><rect x="3.4" y="0.5" width="6.2" height="3.9" fill="#e2e2e2" stroke="#4d4d4d" stroke-width="1"/><circle cx="7.4" cy="2.5" r="0.75" fill="#0d7bb5"/><rect x="2.4" y="7.5" width="9.2" height="6" fill="#8fcaea" stroke="#4d4d4d" stroke-width="1"/><path d="M4.2 9.6H10M4.2 11.5H10" stroke="#0470a8" stroke-width="0.9"/></svg>
<svg style="left:14px;top:724px" width="14" height="16" viewBox="0 0 14 16"><path d="M0.9 5.85L1.05 3.1C2 1.5 4.5 0.85 6.8 0.85C10.5 0.85 13.3 2.3 13.3 5.3C13.3 7.6 11.5 8.4 9.8 9.4C9.1 9.8 8.85 10 8.85 10.5H4.95V8.8C5.2 7.9 7 7.2 8.6 6.3C9.3 5.9 9.45 5.5 9.4 5.1C9.3 4.4 7.8 4.15 6.8 4.2C5.6 4.25 4.9 4.9 4.8 5.85Z" fill="#05699f"/><rect x="4.95" y="12.15" width="3.9" height="2.8" fill="#05699f"/></svg>
<svg style="left:669px;top:724px" width="16" height="16" viewBox="0 0 16 16"><path d="M1 4.96L6.9 1.2V8.7Z" fill="#9a9a9a"/><path d="M6.7 4.05H15.2V4.6L7.7 14.85H6.1V12.45L10.9 5.87H6.7Z" fill="#9a9a9a"/></svg>
<svg style="left:698px;top:724px" width="16" height="16" viewBox="0 0 16 16"><path d="M15.1 11.38L9.2 15.12V7.64Z" fill="#9a9a9a"/><path d="M9.4 12.3H0.9V11.7L8.4 1.5H10V3.9L5.2 10.47H9.4Z" fill="#9a9a9a"/></svg>
</body>
</html>
